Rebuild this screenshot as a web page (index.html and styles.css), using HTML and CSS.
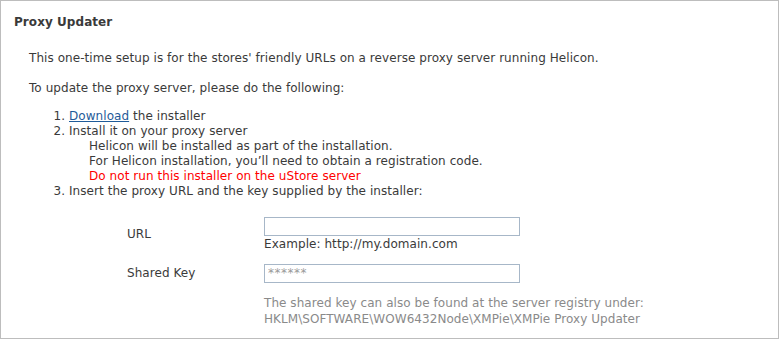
FILE: index.html
```html
<!DOCTYPE html>
<html>

<head>
    <title>Proxy Updater</title>
    <link rel="stylesheet" href="styles.css">
</head>

<body>
    <div id="panel">
        <h2 class="panelTitle">Proxy Updater</h2>
        <div class="panelBody">
            <p>This one-time setup is for the stores' friendly URLs on a reverse proxy server running Helicon.</p>
            <p>To update the proxy server, please do the following:</p>
            <ol class="steps">
                <li><a href="#">Download</a> the installer</li>
                <li>Install it on your proxy server
                    <div class="note">Helicon will be installed as part of the installation.</div>
                    <div class="note">For Helicon installation, you’ll need to obtain a registration code.</div>
                    <div class="note warn">Do not run this installer on the uStore server</div>
                </li>
                <li>Insert the proxy URL and the key supplied by the installer:</li>
            </ol>
            <div class="form">
                <div class="formRow">
                    <label class="formLabel">URL</label>
                    <div class="formField">
                        <input type="text" class="textBox">
                        <div class="hint">Example: http://my.domain.com</div>
                    </div>
                </div>
                <div class="formRow">
                    <label class="formLabel keyLabel">Shared Key</label>
                    <div class="formField">
                        <input type="text" class="textBox" value="******">
                        <div class="keyNote">The shared key can also be found at the server registry under:<br>HKLM\SOFTWARE\WOW6432Node\XMPie\XMPie Proxy Updater</div>
                    </div>
                </div>
            </div>
        </div>
    </div>
</body>

</html>
```

FILE: styles.css
```css
body {
    margin: 0;
    padding: 0;
    background: #fff;
    color: #3a3a3a;
    font-family: "DejaVu Sans", Verdana, sans-serif;
    font-size: 12px;
    letter-spacing: 0.06px;
}

#panel {
    width: 779px;
    height: 339px;
    border: 1px solid #bdbdbd;
    box-sizing: border-box;
    overflow: hidden;
}

.panelTitle {
    margin: 0;
    padding: 13px 0 0 13px;
    font-size: 12px;
    font-weight: bold;
    line-height: 16px;
}

.panelBody {
    padding: 0 0 0 28px;
}

.panelBody p {
    margin: 21px 0 0 0;
    line-height: 15px;
}

.panelBody p + p {
    margin-top: 15px;
}

.steps {
    margin: 13px 0 0 0;
    padding-left: 40px;
    line-height: 15px;
}

.steps a {
    color: #1f5b99;
}

.note {
    padding-left: 20px;
}

.warn {
    color: #ff0000;
}

.form {
    margin-top: 18px;
    padding-left: 98px;
}

.formRow {
    display: flex;
    margin-bottom: 12px;
}

.formLabel {
    width: 137px;
    padding-top: 10px;
}

.formLabel.keyLabel {
    padding-top: 2px;
}

.textBox {
    width: 256px;
    height: 19px;
    margin: 0;
    padding: 0 3px 2px;
    box-sizing: border-box;
    border: 1px solid #a7b7c8;
    font-family: "DejaVu Sans", Verdana, sans-serif;
    font-size: 12px;
    letter-spacing: 0.5px;
    color: #999;
}

.hint {
    line-height: 15px;
    margin-top: 1px;
}

.keyNote {
    color: #8a8a8a;
    margin-top: 12px;
    line-height: 16px;
}
```
